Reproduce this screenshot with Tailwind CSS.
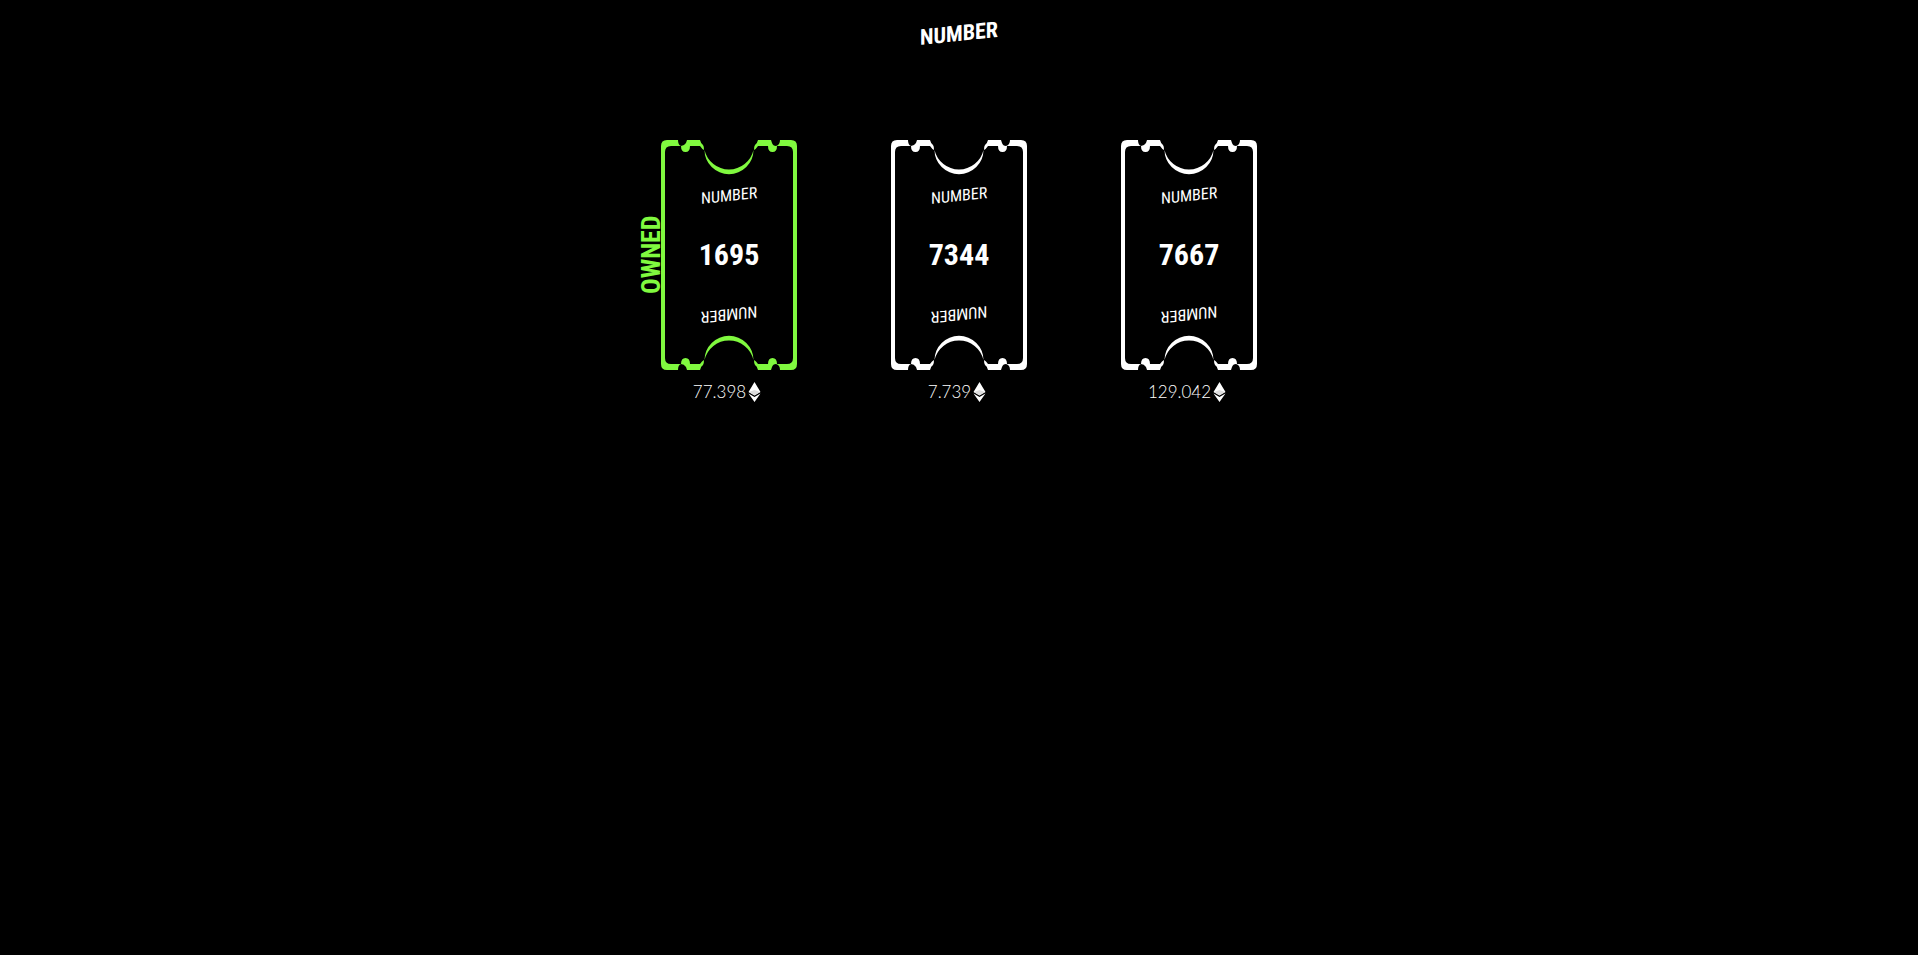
<!DOCTYPE html>
<html lang="en">
<head>
<meta charset="utf-8">
<meta name="viewport" content="width=device-width, initial-scale=1">
<title>NUMBER</title>
<script src="https://cdn.jsdelivr.net/npm/@tailwindcss/browser@4"></script>
</head>
<body class="min-h-screen bg-black font-['Liberation_Sans_Narrow','Roboto_Condensed','Liberation_Sans',sans-serif] text-white">
<svg class="hidden" aria-hidden="true">
  <defs>
    <g id="ticket-end">
      <path d="M0 24V6Q0 0 6 0H17Q17 5 20 6Q23 6 25 3L26 0H39Q40 4 42 5Q43 6 43 10Q41 9 39 6H29Q29 12 24.500 12Q20 12 20 6H10Q4 6 4 12V24Z"/>
      <path d="M136 24V6Q136 0 130 0H119Q119 5 115 6Q112 6 111 3L110 0H97Q96 4 94 5Q93 6 93 10Q95 9 97 6H107Q107 12 111.500 12Q116 12 116 6H126Q132 6 132 12V24Z"/>
      <path d="M43.500 10A24.500 24.200 0 0 0 92.500 10A25.200 25.500 0 0 1 43.500 10Z"/>
    </g>
    <symbol id="ticket" viewBox="0 0 136 230">
      <use href="#ticket-end"/>
      <use href="#ticket-end" transform="matrix(1 0 0 -1 0 230)"/>
      <path d="M0 23H4V207H0ZM132 23H136V207H132Z"/>
    </symbol>
    <symbol id="eth" viewBox="0 0 13 20">
      <path d="M6.500 0L12.500 10L6.500 13.500L.5 10ZM.5 11.500L6.500 15L12.500 11.500L6.500 20Z"/>
      <path d="M1 10L6.500 8L12 10L6.500 13.300Z" fill="#ddd"/>
    </symbol>
  </defs>
</svg>

<header class="flex h-[68px] items-center justify-center">
  <h1 class="-skew-y-6 text-[22px] leading-none font-bold">NUMBER</h1>
</header>

<main class="mt-[72px] flex flex-wrap justify-center">
  <article class="flex w-[230px] flex-col items-center">
    <div class="relative flex h-[230px] w-[136px] flex-col items-center justify-between py-12">
      <svg class="absolute inset-0 size-full fill-[#80f93f]" aria-hidden="true"><use href="#ticket"/></svg>
      <span class="absolute top-0 right-full bottom-0 -mr-1 flex rotate-180 items-center justify-center text-[26px] leading-7 font-bold text-[#80f93f] [writing-mode:vertical-rl]">OWNED</span>
      <span class="-skew-y-6 text-base leading-4">NUMBER</span>
      <strong class="text-[30px] leading-9">1695</strong>
      <span class="rotate-180 -skew-y-6 text-base leading-4">NUMBER</span>
    </div>
    <p class="mt-3 mr-1 flex items-center gap-0.5 font-[Lato,sans-serif] text-[17px] leading-5 font-light">77.398<svg class="h-5 w-[13px] fill-white" role="img" aria-label="ETH"><use href="#eth"/></svg></p>
  </article>
  <article class="flex w-[230px] flex-col items-center">
    <div class="relative flex h-[230px] w-[136px] flex-col items-center justify-between py-12">
      <svg class="absolute inset-0 size-full fill-white" aria-hidden="true"><use href="#ticket"/></svg>
      <span class="-skew-y-6 text-base leading-4">NUMBER</span>
      <strong class="text-[30px] leading-9">7344</strong>
      <span class="rotate-180 -skew-y-6 text-base leading-4">NUMBER</span>
    </div>
    <p class="mt-3 mr-1 flex items-center gap-0.5 font-[Lato,sans-serif] text-[17px] leading-5 font-light">7.739<svg class="h-5 w-[13px] fill-white" role="img" aria-label="ETH"><use href="#eth"/></svg></p>
  </article>
  <article class="flex w-[230px] flex-col items-center">
    <div class="relative flex h-[230px] w-[136px] flex-col items-center justify-between py-12">
      <svg class="absolute inset-0 size-full fill-white" aria-hidden="true"><use href="#ticket"/></svg>
      <span class="-skew-y-6 text-base leading-4">NUMBER</span>
      <strong class="text-[30px] leading-9">7667</strong>
      <span class="rotate-180 -skew-y-6 text-base leading-4">NUMBER</span>
    </div>
    <p class="mt-3 mr-1 flex items-center gap-0.5 font-[Lato,sans-serif] text-[17px] leading-5 font-light">129.042<svg class="h-5 w-[13px] fill-white" role="img" aria-label="ETH"><use href="#eth"/></svg></p>
  </article>
</main>
</body>
</html>
